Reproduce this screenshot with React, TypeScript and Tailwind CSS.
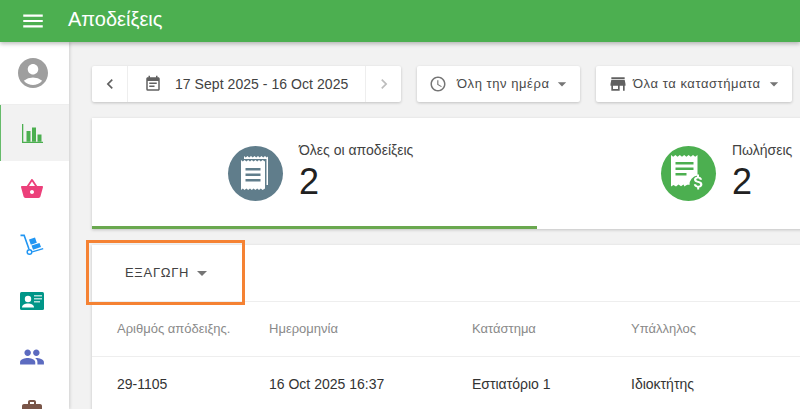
import type { ReactNode } from 'react'
import {
  MdAccessTime,
  MdAccountCircle,
  MdArrowDropDown,
  MdChevronLeft,
  MdChevronRight,
  MdEventNote,
  MdMenu,
  MdPeople,
  MdShoppingBasket,
  MdStore,
  MdWork,
} from 'react-icons/md'

function BarsIcon() {
  return (
    <svg width="21" height="19" viewBox="0 0 21 19" fill="#4caf50">
      <path d="M0 0h1.300v17.700H21V19H0z" />
      <path d="M4.500 7h4v10.700h-4zM10 3.500h4v14.200h-4zM15.500 10.500h4v7.200h-4z" />
    </svg>
  )
}

function TrolleyIcon() {
  return (
    <svg width="24" height="24" viewBox="0 0 24 24" fill="#2196f3">
      <path d="M0.500 1.500h4.200l5 14.200-1.500.6L3.600 3.300H0.500z" />
      <circle cx="9.500" cy="19" r="2.300" fill="none" stroke="#2196f3" strokeWidth="1.500" />
      <path d="M12 18.300l11-3.300.4 1.300-11 3.300z" />
      <path d="M9 6.500l6-2 1.800 5.200-6 2z" />
      <path d="M11.500 12.500l8-2.600 1.500 4.200-8 2.600z" />
    </svg>
  )
}

function IdCardIcon() {
  return (
    <svg width="24" height="18" viewBox="0 0 24 18">
      <rect width="24" height="18" rx="1.500" fill="#009688" />
      <circle cx="8" cy="7" r="3.200" fill="#fff" />
      <path d="M2 15.500c0-2.700 3-4 6-4s6 1.300 6 4z" fill="#fff" />
      <path d="M14 3h8v1.500h-8zM14 6h8v1.500h-8zM14 9h6v1.500h-6z" fill="#b2dfdb" />
    </svg>
  )
}

function ReceiptsIcon() {
  return (
    <svg width="30" height="36" viewBox="0 0 30 36" fill="#fff">
      <path d="M3 0l1.700 1.500L6.500 0l1.700 1.500L10 0l1.700 1.500L13.500 0l1.700 1.500L17 0l1.700 1.500L20.500 0l1.700 1.500L24 0l1.700 1.500L27 0.500V29h-1.500V3H3z" />
      <path d="M0 4l1.800 1.500L3.600 4l1.800 1.500L7.200 4 9 5.500 10.800 4l1.800 1.500L14.400 4l1.800 1.500L18 4l1.800 1.500L21.600 4l2.400 1.500V32.500L21.600 34l-1.800-1.500L18 34l-1.800-1.500L14.400 34l-1.800-1.500L10.800 34 9 32.500 7.200 34l-1.800-1.500L3.600 34l-1.800-1.500L0 34z" />
      <path d="M4.500 12h15v2.400h-15zM4.500 17.500h15v2.400h-15zM4.500 23h15v2.400h-15z" fill="#607d8b" />
    </svg>
  )
}

function SalesReceiptIcon() {
  return (
    <svg width="36" height="38" viewBox="0 0 36 38" fill="#fff">
      <path d="M0 0l2.200 1.700L4.400 0l2.200 1.700L8.800 0 11 1.700 13.200 0l2.200 1.700L17.600 0l2.200 1.700L22 0l2.200 1.700L26.500 0v20.500a9 9 0 0 0-8 9.500c-2-.5-3.500.3-5 1.500l-1-2-2.500 1.800-2.500-1.800-2.500 2L2.500 30 0 31.500z" />
      <path d="M4.500 7h18v2.600h-18zM4.500 12.500h18v2.600h-18zM4.500 18h11v2.600h-11z" fill="#4caf50" />
      <path d="M26 19.500h2v2.200c1.600.3 2.800 1.300 3 3h-2.300c-.1-.8-.8-1.300-1.700-1.300-1 0-1.700.5-1.700 1.200 0 .8.800 1.100 2.300 1.500 2 .5 3.800 1.200 3.800 3.300 0 1.600-1.200 2.700-3.200 3v2.100h-2v-2.100c-1.800-.3-3.200-1.400-3.400-3.200h2.300c.1.900.900 1.500 2.100 1.500 1.300 0 1.900-.6 1.900-1.300 0-.8-.7-1.200-2.400-1.600-2-.5-3.700-1.200-3.700-3.200 0-1.500 1.200-2.600 3-2.900z" />
    </svg>
  )
}

function NavItem({ children, active }: { children: ReactNode; active?: boolean }) {
  return (
    <div
      className={
        active
          ? 'h-14 flex items-center justify-center bg-[#f2f2f2] border-l-[1px] border-[#66bb6a] pr-[6px]'
          : 'h-14 flex items-center justify-center pr-[5px]'
      }
    >
      {children}
    </div>
  )
}

function SelectBox({ icon, label, width }: { icon: ReactNode; label: string; width: string }) {
  return (
    <div className={`${width} h-9 flex items-center bg-white rounded-[2px] shadow-[0_1px_3px_rgba(0,0,0,0.2)] pl-[12px] pr-[8px]`}>
      {icon}
      <span className="text-[13px] tracking-[0.55px] text-[#4a4a4a] whitespace-nowrap">{label}</span>
      <MdArrowDropDown className="ml-auto text-[#757575]" size={20} />
    </div>
  )
}

function Stat({ icon, color, title, left }: { icon: ReactNode; color: string; title: string; left: string }) {
  return (
    <div className={`w-[445px] shrink-0 flex items-start pt-[28px] ${left}`}>
      <div className={`w-[55px] h-[55px] rounded-full flex items-center justify-center ${color}`}>{icon}</div>
      <div className="ml-[16px] -mt-[6px]">
        <div className="text-[14px] leading-[20px] text-[#424242] whitespace-nowrap">{title}</div>
        <div className="text-[36px] leading-[42px] mt-[1px] text-[#212121]">2</div>
      </div>
    </div>
  )
}

export default function App() {
  return (
    <div className="relative w-[800px] h-[409px] overflow-hidden bg-[#f2f2f2] font-['Liberation_Sans',sans-serif]">
      <header className="relative z-20 h-[42px] bg-[#4caf50] flex items-center pl-[20px] shadow-[0_2px_4px_rgba(0,0,0,0.25)]">
        <MdMenu className="text-white" size={26} />
        <h1 className="ml-[22px] -mt-[4px] text-[20px] text-white leading-none">Αποδείξεις</h1>
      </header>

      <div className="flex h-[367px]">
        <nav className="relative z-10 w-[69px] shrink-0 bg-white shadow-[1px_0_3px_rgba(0,0,0,0.15)]">
          <div className="h-[63px] flex items-center justify-center border-b border-[#eeeeee] pr-[3px]">
            <MdAccountCircle className="text-[#9e9e9e]" size={36} />
          </div>
          <NavItem active><BarsIcon /></NavItem>
          <NavItem><MdShoppingBasket className="text-[#ec407a]" size={24} /></NavItem>
          <NavItem><TrolleyIcon /></NavItem>
          <NavItem><IdCardIcon /></NavItem>
          <NavItem><MdPeople className="text-[#5c6bc0]" size={26} /></NavItem>
          <NavItem><MdWork className="text-[#795548] -mt-[6px]" size={24} /></NavItem>
        </nav>

        <main className="flex-1 min-w-0 pl-[23px] pt-[24px]">
          <div className="flex gap-4 h-9">
            <div className="w-[309px] h-9 flex items-center bg-white rounded-[2px] shadow-[0_1px_3px_rgba(0,0,0,0.2)]">
              <div className="w-9 h-9 flex items-center justify-center border-r border-[#eeeeee]">
                <MdChevronLeft className="text-[#616161]" size={20} />
              </div>
              <div className="flex-1 flex items-center pl-[16px]">
                <MdEventNote className="text-[#616161]" size={18} />
                <span className="ml-[13px] text-[14px] tracking-[0.05px] text-[#424242] whitespace-nowrap">17 Sept 2025 - 16 Oct 2025</span>
              </div>
              <div className="w-9 h-9 flex items-center justify-center border-l border-[#eeeeee]">
                <MdChevronRight className="text-[#bdbdbd]" size={20} />
              </div>
            </div>
            <SelectBox width="w-[163px]" icon={<MdAccessTime className="text-[#757575] mr-[10px]" size={18} />} label="Όλη την ημέρα" />
            <SelectBox width="w-[196px]" icon={<MdStore className="text-[#616161] mr-[5px]" size={20} />} label="Όλα τα καταστήματα" />
          </div>

          <section className="relative w-[760px] h-[111px] mt-4 bg-white flex overflow-hidden shadow-[0_1px_3px_rgba(0,0,0,0.2)]">
            <Stat icon={<ReceiptsIcon />} color="bg-[#607d8b]" title="Όλες οι αποδείξεις" left="pl-[136px]" />
            <Stat icon={<SalesReceiptIcon />} color="bg-[#4caf50]" title="Πωλήσεις" left="pl-[124px]" />
            <div className="absolute left-0 bottom-0 w-[445px] h-[3px] bg-[#6aa84f]" />
          </section>

          <section className="w-[760px] h-[200px] mt-4 bg-white shadow-[0_1px_3px_rgba(0,0,0,0.2)]">
            <div className="h-[57px] flex items-center pl-[33px] border-b border-[#eeeeee]">
              <span className="text-[13px] tracking-[0.7px] text-[#424242]">ΕΞΑΓΩΓΗ</span>
              <MdArrowDropDown className="ml-[1px] text-[#757575]" size={24} />
            </div>
            <div className="h-[55px] flex items-center pl-[25px] border-b border-[#eeeeee] text-[13px] text-[#8a8a8a]">
              <span className="w-[152px] whitespace-nowrap">Αριθμός απόδειξης.</span>
              <span className="w-[203px]">Ημερομηνία</span>
              <span className="w-[159px]">Κατάστημα</span>
              <span>Υπάλληλος</span>
            </div>
            <div className="h-[54px] flex items-center pl-[25px] text-[14px] text-[#333333]">
              <span className="w-[152px]">29-1105</span>
              <span className="w-[203px]">16 Oct 2025 16:37</span>
              <span className="w-[159px]">Εστιατόριο 1</span>
              <span>Ιδιοκτήτης</span>
            </div>
          </section>
        </main>
      </div>

      {/* annotation frame round the export button */}
      <div className="absolute z-30 left-[86px] top-[240px] w-[159px] h-[65px] border-[3px] border-[#f58233]" />
    </div>
  )
}
